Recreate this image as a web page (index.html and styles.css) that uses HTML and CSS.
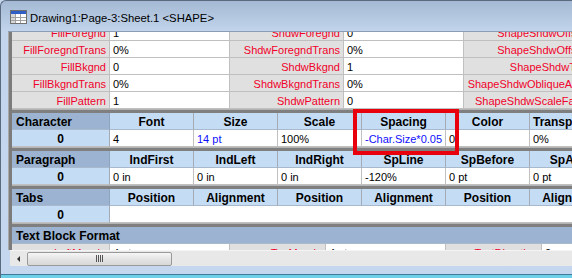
FILE: index.html
```html
<!DOCTYPE html>
<html>
<head>
<meta charset="utf-8">
<link rel="stylesheet" href="styles.css">
</head>
<body>
<div class="window">
  <div class="titlebar">
    <svg class="icon" width="17" height="14" viewBox="0 0 17 14">
      <rect x="0.5" y="0.5" width="16" height="13" fill="#ffffff" stroke="#707070"/>
      <rect x="1" y="1" width="15" height="3" fill="#2f5fc4"/>
      <rect x="1" y="4" width="4" height="9" fill="#d8d8d8"/>
      <path d="M1 7.5H16M1 10.5H16M5.5 4V13M10.5 4V13" stroke="#a0a0a0" stroke-width="1"/>
    </svg>
    <span class="title">Drawing1:Page-3:Sheet.1 &lt;SHAPE&gt;</span>
  </div>
  <div class="client">
    <div class="main">
      <div class="lbar"></div>
      <div class="viewport">
        <div class="sheet">
          <div class="fill">
            <div class="c lbl">FillForegnd</div><div class="c val">1</div><div class="c lbl">ShdwForegnd</div><div class="c val">0</div><div class="c lbl">ShapeShdwOffsetX</div><div class="c val">0 in</div>
            <div class="c lbl">FillForegndTrans</div><div class="c val">0%</div><div class="c lbl">ShdwForegndTrans</div><div class="c val">0%</div><div class="c lbl">ShapeShdwOffsetY</div><div class="c val">0 in</div>
            <div class="c lbl">FillBkgnd</div><div class="c val">0</div><div class="c lbl">ShdwBkgnd</div><div class="c val">1</div><div class="c lbl">ShapeShdwType</div><div class="c val">0</div>
            <div class="c lbl">FillBkgndTrans</div><div class="c val">0%</div><div class="c lbl">ShdwBkgndTrans</div><div class="c val">0%</div><div class="c lbl">ShapeShdwObliqueAngle</div><div class="c val">0 deg</div>
            <div class="c lbl">FillPattern</div><div class="c val">1</div><div class="c lbl">ShdwPattern</div><div class="c val">0</div><div class="c lbl">ShapeShdwScaleFactor</div><div class="c val">100%</div>
          </div>
          <div class="sep"></div>
          <div class="std">
            <div class="c sh">Character</div><div class="c ch">Font</div><div class="c ch">Size</div><div class="c ch">Scale</div><div class="c ch">Spacing</div><div class="c ch">Color</div><div class="c ch">Transparency</div>
            <div class="c dl">0</div><div class="c val">4</div><div class="c val blue">14 pt</div><div class="c val">100%</div><div class="c val blue">-Char.Size*0.05</div><div class="c val">0</div><div class="c val">0%</div>
          </div>
          <div class="sep"></div>
          <div class="std">
            <div class="c sh">Paragraph</div><div class="c ch">IndFirst</div><div class="c ch">IndLeft</div><div class="c ch">IndRight</div><div class="c ch">SpLine</div><div class="c ch">SpBefore</div><div class="c ch">SpAfter</div>
            <div class="c dl">0</div><div class="c val">0 in</div><div class="c val">0 in</div><div class="c val">0 in</div><div class="c val">-120%</div><div class="c val">0 pt</div><div class="c val">0 pt</div>
          </div>
          <div class="sep"></div>
          <div class="std">
            <div class="c sh">Tabs</div><div class="c ch">Position</div><div class="c ch">Alignment</div><div class="c ch">Position</div><div class="c ch">Alignment</div><div class="c ch">Position</div><div class="c ch">Alignment</div>
            <div class="c dl">0</div><div class="c val span"></div>
          </div>
          <div class="sep"></div>
          <div class="tbf">
            <div class="c sh full">Text Block Format</div>
            <div class="c lbl">LeftMargin</div><div class="c val">4 pt</div><div class="c lbl">TopMargin</div><div class="c val">4 pt</div><div class="c lbl">TextDirection</div><div class="c val">0</div>
          </div>
        </div>
      </div>
    </div>
    <div class="hscroll">
      <div class="sbtn"><span class="arrow"></span></div>
      <div class="thumb"><span class="grip"></span></div>
    </div>
  </div>
  <div class="bottom"></div>
  <div class="redbox"></div>
</div>
</body>
</html>
```

FILE: styles.css
```css
* { box-sizing: border-box; }
html, body { margin: 0; padding: 0; width: 572px; height: 278px; overflow: hidden; background: #c4d7ee; }
body { font-family: "Liberation Sans", Arial, sans-serif; }

.window {
  position: relative;
  width: 572px;
  height: 278px;
  background: linear-gradient(#a4b9d3, #c2d5ec 31px, #c4d7ee);
  border-left: 1px solid #5a6b80;
  border-top: 1px solid #5a6b80;
  border-top-left-radius: 6px;
  display: flex;
  flex-direction: column;
  overflow: hidden;
}

.titlebar {
  height: 30px;
  display: flex;
  align-items: center;
  padding-left: 9px;
  padding-top: 3px;
  gap: 3px;
  flex: none;
}
.icon { display: block; flex: none; margin-top: -1px; }
.title { font-size: 11.3px; color: #000; white-space: nowrap; }

.client {
  flex: none;
  height: 235px;
  margin-left: 7px;
  border-top: 1px solid #8d9db3;
  display: flex;
  flex-direction: column;
}
.main { flex: 1; display: flex; min-height: 0; }
.lbar { width: 4px; flex: none; background: #7c7c7c; border-left: 1px solid #a8a8a8; }
.viewport { flex: 1; overflow: hidden; background: #fff; }
.sheet { margin-top: -8px; }

.c {
  height: 17px;
  border-right: 1px solid #c0c0c0;
  border-bottom: 1px solid #c0c0c0;
  font-size: 11px;
  line-height: 16px;
  padding: 1px 3px 0;
  white-space: nowrap;
  overflow: hidden;
}
.lbl { background: #e0e0e0; color: #f0002a; text-align: right; }
.val { background: #fff; color: #000; }
.blue { color: #1010ff; }

.fill { display: grid; grid-template-columns: 98px 120px 114px 120px 133px 120px; grid-auto-rows: 17px; }
.std { display: grid; grid-template-columns: 98px repeat(6, 84px); grid-auto-rows: 17px; }
.tbf { display: grid; grid-template-columns: 98px 120px 96px 120px 96px 120px; grid-auto-rows: 17px; }

.sep { height: 4px; background: #7f7f7f; border-top: 1px solid #b4b4b4; }

.sh { background: #9cb4d1; font-weight: bold; font-size: 12px; padding-left: 4px; border-right-color: #8fa3bd; border-bottom-color: #a9b9cd; }
.ch { background: #c5dcf5; font-weight: bold; font-size: 12px; text-align: center; border-right-color: #a4abb5; border-bottom-color: #a9b9cd; }
.dl { background: #c5dcf5; font-weight: bold; font-size: 12px; text-align: center; border-right-color: #a4abb5; }
.span { grid-column: 2 / -1; }
.full { grid-column: 1 / -1; border-right: none; }

.hscroll {
  height: 16px;
  flex: none;
  margin-left: 2px;
  background: #e8e8e8;
  border-top: 1px solid #f4f4f4;
  display: flex;
  align-items: center;
}
.sbtn { width: 17px; height: 15px; flex: none; display: flex; align-items: center; justify-content: center; }
.arrow { width: 0; height: 0; border-top: 3px solid transparent; border-bottom: 3px solid transparent; border-right: 3px solid #303030; }
.thumb {
  width: 145px;
  height: 14px;
  flex: none;
  border: 1px solid #999;
  border-radius: 2px;
  background: linear-gradient(#f6f6f6, #e4e4e4 50%, #d8d8d8);
  display: flex;
  align-items: center;
  justify-content: center;
}
.grip { width: 7px; height: 7px; background: repeating-linear-gradient(90deg, #555 0 1px, transparent 1px 2px); }

.bottom { flex: 1; border-bottom: 3px solid #6fcfe6; box-shadow: inset 0 -1px 0 #3c7b9b; }

.redbox {
  position: absolute;
  left: 352px;
  top: 108px;
  width: 106px;
  height: 46px;
  border: 4px solid #e8000c;
}
```
